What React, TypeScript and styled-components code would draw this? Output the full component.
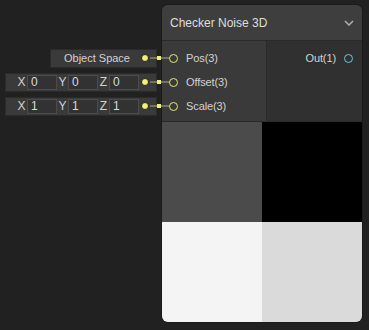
import styled, { createGlobalStyle } from "styled-components";

const GlobalStyle = createGlobalStyle`
  html, body {
    margin: 0;
    padding: 0;
    background: #212121;
  }
  body {
    font-family: "Liberation Sans", Arial, sans-serif;
    color: #cfcfcf;
  }
`;

const inputs = ["Pos(3)", "Offset(3)", "Scale(3)"];
const previewColors = ["#4b4b4b", "#000000", "#f4f4f4", "#dadada"];

export default function App() {
  return (
    <>
      <GlobalStyle />
      <Canvas>
        <LeftColumn>
          <FieldRow>
            <FieldBox>
              <SpaceLabel>Object Space</SpaceLabel>
              <Dot />
            </FieldBox>
            <Wire />
          </FieldRow>
          <VectorRow values={["0", "0", "0"]} />
          <VectorRow values={["1", "1", "1"]} />
        </LeftColumn>

        <Node>
          <Header>
            <Title>Checker Noise 3D</Title>
            <svg width="10" height="6" viewBox="0 0 10 6">
              <polyline
                points="1,1 5,5 9,1"
                fill="none"
                stroke="#b0b0b0"
                strokeWidth="1.5"
              />
            </svg>
          </Header>
          <Body>
            <Inputs>
              {inputs.map((name) => (
                <Port key={name}>
                  <Socket $color="#e4e47a" />
                  <PortLabel>{name}</PortLabel>
                </Port>
              ))}
            </Inputs>
            <Outputs>
              <Port>
                <PortLabel>Out(1)</PortLabel>
                <Socket $color="#6cc7d4" />
              </Port>
            </Outputs>
          </Body>
          <Preview>
            {previewColors.map((c) => (
              <Cell key={c} $bg={c} />
            ))}
          </Preview>
        </Node>
      </Canvas>
    </>
  );
}

function VectorRow({ values }: { values: string[] }) {
  const axes = ["X", "Y", "Z"];
  return (
    <FieldRow>
      <FieldBox $wide>
        {axes.map((axis, i) => (
          <Axis key={axis}>
            <AxisLabel>{axis}</AxisLabel>
            <NumberField>{values[i]}</NumberField>
          </Axis>
        ))}
        <Dot />
      </FieldBox>
      <Wire />
    </FieldRow>
  );
}

const Canvas = styled.div`
  display: flex;
  align-items: flex-start;
  padding-top: 5px;
  width: 369px;
  height: 325px;
`;

const LeftColumn = styled.div`
  width: 162px;
  padding-top: 41px;
  display: flex;
  flex-direction: column;
  position: relative;
  z-index: 2;
`;

const FieldRow = styled.div`
  position: relative;
  height: 24px;
  display: flex;
  align-items: center;
  justify-content: flex-end;
  padding-right: 5px;
`;

const FieldBox = styled.div<{ $wide?: boolean }>`
  box-sizing: border-box;
  height: 19px;
  width: ${({ $wide }) => ($wide ? "152px" : "107px")};
  padding: ${({ $wide }) => ($wide ? "0 7px 0 10px" : "0 7px 0 0")};
  display: flex;
  align-items: center;
  background: #3a3a3a;
  border: 1px solid #2b2b2b;
  white-space: nowrap;
`;

const SpaceLabel = styled.span`
  flex: 1;
  text-align: right;
  font-size: 11px;
  color: #d2d2d2;
  margin-right: 11px;
`;

const Axis = styled.div`
  display: flex;
  align-items: center;
`;

const AxisLabel = styled.span`
  width: 11px;
  text-align: center;
  font-size: 12px;
  color: #d2d2d2;
`;

const NumberField = styled.div`
  box-sizing: border-box;
  width: 30px;
  height: 15px;
  padding-left: 3px;
  font-size: 12px;
  line-height: 13px;
  color: #dadada;
  background: #323232;
  border: 1px solid #4c4c4c;
`;

const Dot = styled.div`
  box-sizing: border-box;
  width: 8px;
  height: 8px;
  margin-left: auto;
  flex-shrink: 0;
  border-radius: 50%;
  background: #f0f07a;
  border: 1.5px solid #222222;
  position: relative;
  z-index: 1;
`;

const Wire = styled.div`
  position: absolute;
  left: 150px;
  top: 11px;
  width: 20px;
  height: 2px;
  background: #74745e;

  &::after {
    content: "";
    position: absolute;
    left: 7px;
    top: -1px;
    width: 4px;
    height: 4px;
    background: #f0f07a;
  }
`;

const Node = styled.div`
  width: 200px;
  border-radius: 6px;
  overflow: hidden;
  background: #3d3d3d;
  box-shadow: 0 0 0 1px #1b1b1b;
`;

const Header = styled.div`
  height: 35px;
  display: flex;
  align-items: center;
  justify-content: space-between;
  padding: 0 8px;
  background: #3e3e3e;
  border-bottom: 1px solid #2a2a2a;
`;

const Title = styled.span`
  font-size: 12px;
  color: #dedede;
`;

const Body = styled.div`
  display: flex;
  height: 80px;
  border-bottom: 1px solid #2a2a2a;
`;

const Inputs = styled.div`
  box-sizing: border-box;
  width: 105px;
  padding: 5px 0 0 7px;
  background: #3a3a3a;
  border-right: 1px solid #2a2a2a;
`;

const Outputs = styled.div`
  flex: 1;
  padding: 5px 9px 0 0;
  display: flex;
  flex-direction: column;
  align-items: flex-end;
  background: #303030;
`;

const Port = styled.div`
  height: 24px;
  display: flex;
  align-items: center;
  gap: 8px;
`;

const Socket = styled.div<{ $color: string }>`
  box-sizing: border-box;
  width: 9px;
  height: 9px;
  border-radius: 50%;
  border: 1.5px solid ${({ $color }) => $color};
  background: transparent;
  position: relative;
  z-index: 3;
`;

const PortLabel = styled.span`
  font-size: 11px;
  color: #d2d2d2;
  letter-spacing: -0.1px;
`;

const Preview = styled.div`
  display: grid;
  grid-template-columns: 100px 100px;
  grid-template-rows: 100px 100px;
`;

const Cell = styled.div<{ $bg: string }>`
  background: ${({ $bg }) => $bg};
`;
